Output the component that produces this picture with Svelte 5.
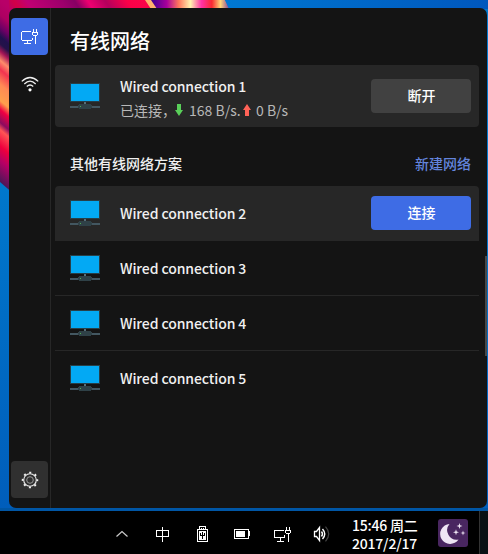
<script>
  const others = [2, 3, 4, 5];
</script>

{#snippet monitor()}
  <svg class="monitor" width="30" height="30" viewBox="0 0 30 30" shape-rendering="crispEdges">
    <rect x="0" y="2" width="30" height="19" fill="#273f48" />
    <rect x="1" y="3" width="28" height="17" fill="#03a9f4" />
    <rect x="14" y="21" width="2" height="3" fill="#546e7a" />
    <rect x="0" y="25" width="30" height="2" fill="#435761" />
    <rect x="8" y="24" width="14" height="3" fill="#314349" />
    <rect x="9" y="23" width="12" height="5" fill="#2f4147" />
    <rect x="10" y="25" width="1" height="1" fill="#4caf50" />
  </svg>
{/snippet}

{#snippet wired(size)}
  <svg width={size} height={size} viewBox="0 0 {size} {size}" fill="none" stroke="#fff" shape-rendering="crispEdges">
    {#if size === 19}
      <path d="M11 4.5H2M1.5 5V13M2 13.5H12M12.5 11V13M7.5 14V16M4 16.5H11" />
    {:else}
      <path d="M11 5.5H1.5V12.5H11.5V10M7.5 13V16M4 16.5H11" />
    {/if}
    <path d="M13.5 2V5M16.5 2V5M12.5 5V8M17.5 5V8M13 5.5H17M13 8.5H17M15.5 9V17" />
  </svg>
{/snippet}

<div class="screen">
  <svg class="wallpaper" width="488" height="511" viewBox="0 0 488 511">
    <defs>
      <linearGradient id="sky" x1="0" y1="0" x2="0" y2="1"><stop stop-color="#0078cd" /><stop offset=".35" stop-color="#0078cc" /><stop offset="1" stop-color="#005dbb" /></linearGradient>
      <linearGradient id="top" gradientUnits="userSpaceOnUse" x1="0" y1="0" x2="152" y2="-100"><stop stop-color="#b0006a" /><stop offset=".06" stop-color="#d10047" /><stop offset=".12" stop-color="#c10073" /><stop offset=".28" stop-color="#9d006c" /><stop offset=".34" stop-color="#870064" /><stop offset=".4" stop-color="#ed0070" /><stop offset=".48" stop-color="#b4005d" /><stop offset=".58" stop-color="#fa0048" /><stop offset="1" stop-color="#ff164c" /></linearGradient>
      <linearGradient id="ribbon"><stop stop-color="#3b0090" /><stop offset=".2" stop-color="#a8009c" /><stop offset=".35" stop-color="#ff755d" /><stop offset=".5" stop-color="#fff3b0" /><stop offset=".64" stop-color="#ff31a6" /><stop offset=".77" stop-color="#f92931" /><stop offset=".88" stop-color="#ffd579" /><stop offset="1" stop-color="#75339d" /></linearGradient>
      <linearGradient id="edge" gradientUnits="userSpaceOnUse" x1="0" y1="0" x2="-90" y2="106"><stop stop-color="#b80068" /><stop offset=".08" stop-color="#ad0061" /><stop offset=".15" stop-color="#6b0065" /><stop offset=".2" stop-color="#20104e" /><stop offset=".24" stop-color="#241249" /><stop offset=".28" stop-color="#a31556" /><stop offset=".33" stop-color="#ff8b6b" /><stop offset=".38" stop-color="#f23450" /><stop offset=".46" stop-color="#ff8a55" /><stop offset=".55" stop-color="#ffa04c" /><stop offset=".6" stop-color="#f00042" /><stop offset=".67" stop-color="#8b0b60" /><stop offset=".71" stop-color="#ff5455" /><stop offset=".8" stop-color="#ee003d" /><stop offset=".88" stop-color="#b40065" /><stop offset="1" stop-color="#4a1758" /></linearGradient>
      <linearGradient id="topblue"><stop stop-color="#0078d2" /><stop offset="1" stop-color="#0057bd" /></linearGradient>
    </defs>
    <rect width="488" height="511" fill="url(#sky)" />
    <path d="M0 0H30V208L0 182Z" fill="url(#edge)" />
    <path d="M9 0H152V9H9Z" fill="url(#top)" />
    <path d="M145 0H152L158 9H151Z" fill="#ffb16d" />
    <path d="M151 0H225L230 9H157Z" fill="url(#ribbon)" />
    <path d="M225 0H488V9H229Z" fill="url(#topblue)" />
    <rect y="508" width="488" height="3" fill="#0056a5" />
  </svg>

  <main class="panel">
    <nav>
      <button class="tab active" aria-label="有线网络">{@render wired(19)}</button>
      <button class="tab wifi" aria-label="无线网络">
        <svg width="18" height="18" viewBox="0 0 18 18" fill="none" stroke="#eee" stroke-width="1.3">
          <path d="M.8 6.4Q9-1.5 17.2 6.4M3.3 9Q9 3.3 14.7 9M5.8 11.5Q9 8.5 12.2 11.5" /><circle cx="9" cy="14.8" r="1.6" fill="#fff" stroke="none" />
        </svg>
      </button>
      <button class="tab settings" aria-label="设置">
        <svg width="18" height="18" viewBox="0 0 18 18" fill="none" stroke="#eee">
          <circle cx="9" cy="9" r="6.3" stroke-width="1.1" /><circle cx="9" cy="9" r="7.4" stroke-width="1.7" stroke-dasharray="2.1 3.712" stroke-dashoffset="1.05" /><circle cx="9" cy="9" r="3.3" stroke="#999" />
        </svg>
      </button>
    </nav>
    <section>
      <h1>有线网络</h1>
      <article class="card">
        {@render monitor()}
        <div class="info">
          <div class="name">Wired connection 1</div>
          <div class="status">
            <span>已连接，</span>
            <svg width="8" height="12" viewBox="0 0 8 12"><path d="M2 0H6V6H8L4 12L0 6H2Z" fill="#59cf59" /></svg>
            <span class="down">168 B/s.</span>
            <svg width="8" height="12" viewBox="0 0 8 12"><path d="M4 0L8 6H6V12H2V6H0Z" fill="#ff6257" /></svg>
            <span class="up">0 B/s</span>
          </div>
        </div>
        <button class="action">断开</button>
      </article>
      <header><h2>其他有线网络方案</h2><a href="#new">新建网络</a></header>
      <div class="list">
        {#each others as n}
          <article class="row" class:selected={n === 2} class:last={n === 5}>
            {@render monitor()}
            <div class="info name">Wired connection {n}</div>
            {#if n === 2}<button class="action primary">连接</button>{/if}
          </article>
        {/each}
      </div>
    </section>
    <div class="scroll"></div>
  </main>

  <footer>
    <div class="tray">
      <svg width="18" height="18" viewBox="0 0 18 18"><path d="M3.5 11.5L9 6.5L14.5 11.5" fill="none" stroke="#ccc" stroke-width="1.2" /></svg>
      <svg width="18" height="18" viewBox="0 0 18 18" fill="none" stroke="#fff" shape-rendering="crispEdges"><path d="M3.5 5.5H15.5V11.5H3.5ZM9.5 2V17" /></svg>
      <svg width="18" height="18" viewBox="0 0 18 18" fill="none" stroke="#fff" shape-rendering="crispEdges"><path d="M6.5 4V1.5H12.5V4M4.5 4.5H14.5V16.5H4.5Z" /><path d="M8 3.5H9M10 3.5H11" /><path d="M6 6H13V15H6Z" fill="#fff" stroke="none" /><path d="M9.5 7V14M7.5 8V10.5H9M11.5 8V10.5H10" stroke="#000" /></svg>
      <svg width="18" height="18" viewBox="0 0 18 18" shape-rendering="crispEdges"><path d="M1.5 4.5H15.5V13.5H1.5Z" fill="none" stroke="#fff" /><path d="M3 6H12V12H3ZM16 6H17V11H16Z" fill="#fff" /></svg>
      {@render wired(18)}
      <svg width="18" height="18" viewBox="0 0 18 18" fill="none" stroke="#fff"><path d="M1.5 6.5H3.5L6.5 2.5V15.5L3.5 11.5H1.5Z" stroke-width="1.3" /><path d="M8.5 6.5Q10.5 9 8.5 11.5M9.5 4Q14 9 9.5 14" stroke-width="1.4" /><path d="M12.5 1.7Q19 9 12.5 16.3" stroke="#444" stroke-width="1.2" /></svg>
    </div>
    <div class="clock"><div>15:46 周二</div><div>2017/2/17</div></div>
    <svg class="moon" width="30" height="28" viewBox="0 0 30 28">
      <rect width="30" height="28" rx="3" fill="#492660" /><path d="M11.5 5A10 10 0 1 0 20.5 20.5A9.5 9.5 0 0 1 11.5 5Z" fill="#eee5f3" />
      <path d="M21.5 4L22.2 6.3L24.5 7L22.2 7.7L21.5 10L20.8 7.7L18.5 7L20.8 6.3ZM18 10.3L18.7 12.6L21 13.3L18.7 14L18 16.3L17.3 14L15 13.3L17.3 12.6ZM25 11.5L25.6 13.4L27.5 14L25.6 14.6L25 16.5L24.4 14.6L22.5 14L24.4 13.4Z" fill="#eee5f3" />
    </svg>
    <div class="desktop"></div>
  </footer>
</div>

<style>
  .screen { position: relative; width: 488px; height: 554px; overflow: hidden; background: #000; color: #f0f0f0; font: 500 14px/20px "Noto Sans CJK SC", sans-serif; display: flex; flex-direction: column; }
  .wallpaper { position: absolute; left: 0; top: 0; }
  svg { display: block; flex: none; }
  button { border: 0; padding: 0; font: inherit; color: #fff; background: none; }
  .panel { position: relative; display: flex; box-sizing: border-box; width: 478px; height: 500px; margin: 8px 0 3px 9px; background: #141414; border-radius: 7px; overflow: hidden; flex: none; }
  nav { display: flex; flex-direction: column; box-sizing: border-box; width: 42px; padding: 10px 2px; border-right: 1px solid #272727; flex: none; }
  .tab { display: flex; width: 37px; height: 37px; align-items: center; justify-content: center; border-radius: 4px; }
  .active { background: #3e6ce5; }
  .wifi { margin-top: 10px; }
  .settings { margin-top: auto; background: #303030; }
  section { width: 424px; margin-left: 4px; }
  h1 { margin: 0; padding: 19px 0 11px 15px; font-size: 20px; line-height: 27px; font-weight: 500; color: #fff; }
  .card, .row { display: flex; align-items: center; box-sizing: border-box; padding: 0 8px 0 15px; }
  .card { height: 62px; border-radius: 4px; background: #272727; }
  .info { flex: 1; margin-left: 20px; }
  .name { white-space: nowrap; letter-spacing: -.1px; }
  .card .name { line-height: 24px; margin-top: 4px; }
  .status { display: flex; align-items: center; height: 24px; color: #b8b8b8; font-weight: 400; }
  .status > span { white-space: nowrap; }
  .status > span:first-child { width: 55px; }
  .down { margin-left: 6px; width: 54px; }
  .up { margin-left: 5px; }
  .action { width: 100px; height: 34px; border-radius: 4px; background: #414141; line-height: 32px; padding: 0 0 2px 1px; }
  .primary { background: #3e6ce5; }
  header { display: flex; justify-content: space-between; align-items: center; height: 59px; padding: 13px 8px 0 15px; box-sizing: border-box; }
  h2 { margin: 0; font-size: 14px; font-weight: 500; }
  a { color: #6384dc; text-decoration: none; }
  .row { height: 55px; border-bottom: 1px solid #272727; }
  .row.last { border-bottom-color: transparent; }
  .selected { background: #272727; border-radius: 4px 4px 0 0; }
  .scroll { position: absolute; right: 0; top: 248px; width: 2px; height: 100px; background: #484848; }
  footer { position: relative; display: flex; height: 43px; background: #000; }
  .tray { display: flex; gap: 22px; margin: 14px 0 0 113px; height: 18px; }
  .clock { margin: 5px 0 0 21px; width: 66px; letter-spacing: -.2px; line-height: 18px; white-space: nowrap; color: #fff; }
  .moon { margin: 8px 0 0 20px; }
  .desktop { margin-left: auto; width: 8px; border-left: 1px solid #333; background: #081014; }
</style>
